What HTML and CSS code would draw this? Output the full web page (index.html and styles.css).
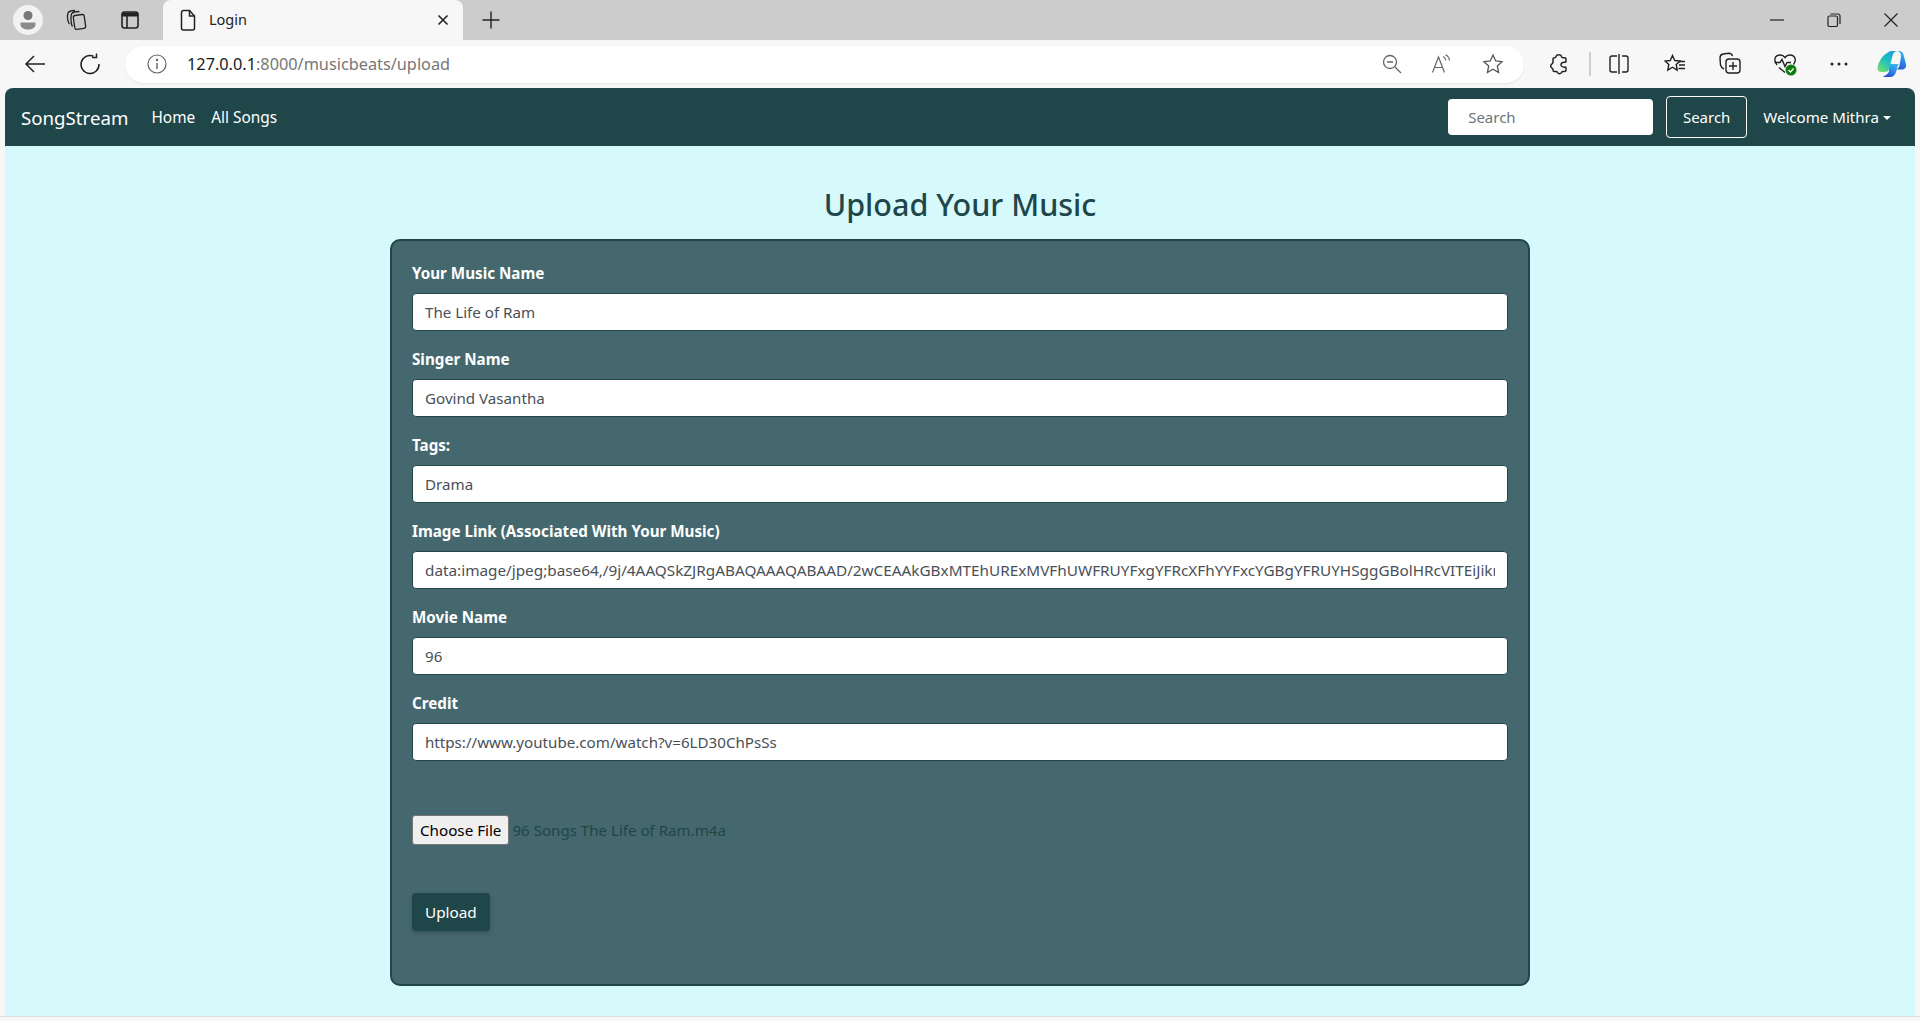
FILE: index.html
```html
<!DOCTYPE html>
<html lang="en">

<head>
  <meta charset="UTF-8">
  <title>Login</title>
  <link rel="stylesheet" href="styles.css">
</head>

<body>

  <div class="tabstrip">
    <span class="avatar">
      <svg width="28" height="28" viewBox="0 0 28 28"><circle cx="14" cy="9.5" r="4.5" fill="#777"/><path d="M6.500 16.500h15v2c0 3.500-3.500 5-7.500 5s-7.500-1.500-7.500-5z" fill="#8a8a8a"/></svg>
    </span>
    <span class="strip-icon icon-workspaces">
      <svg width="24" height="24" viewBox="0 0 24 24" fill="none" stroke="#222" stroke-width="1.300"><rect x="10" y="7" width="11" height="14" rx="2" transform="rotate(-8 15 14)"/><path d="M8.500 18.500C7 17 6.500 9 7.500 6c1-2 4-2.500 8-2.500M5.500 16C3.500 14 3 8 4 5c1-2 4-2.500 7-2.500"/></svg>
    </span>
    <span class="strip-icon icon-vtabs">
      <svg width="22" height="22" viewBox="0 0 22 22" fill="none" stroke="#222" stroke-width="1.600"><rect x="3" y="3" width="16" height="16" rx="2.500"/><path d="M3 5.500h16" stroke-width="4"/><path d="M8 6v13"/></svg>
    </span>
    <div class="tab">
      <svg width="20" height="24" viewBox="0 0 20 24" fill="none" stroke="#222" stroke-width="1.500"><path d="M3.500 4.500a2 2 0 0 1 2-2h6l5 5.500v12a2 2 0 0 1-2 2h-9a2 2 0 0 1-2-2z"/><path d="M11.500 2.500v5.500h5"/></svg>
      <span class="tab-title">Login</span>
      <svg class="tab-close" width="12" height="12" viewBox="0 0 12 12" stroke="#222" stroke-width="1.600"><path d="M1.500 1.500l9 9M10.500 1.500l-9 9"/></svg>
    </div>
    <svg class="new-tab" width="20" height="20" viewBox="0 0 20 20" stroke="#222" stroke-width="1.400"><path d="M10 1.500v17M1.500 10h17"/></svg>
    <div class="window-btns">
      <svg width="14" height="14" viewBox="0 0 14 14" stroke="#222" stroke-width="1.200"><path d="M0 7h14"/></svg>
      <svg width="14" height="14" viewBox="0 0 14 14" fill="none" stroke="#222" stroke-width="1.200"><rect x="1" y="3" width="9.500" height="10.500" rx="1.500"/><path d="M3.500 1h7.500a2 2 0 0 1 2 2v8"/></svg>
      <svg width="14" height="14" viewBox="0 0 14 14" stroke="#222" stroke-width="1.200"><path d="M0.500 0.500l13 13M13.500 0.500l-13 13"/></svg>
    </div>
  </div>

  <div class="toolbar">
    <svg class="back" width="22" height="20" viewBox="0 0 22 20" fill="none" stroke="#222" stroke-width="1.500"><path d="M21 10H2M10 2l-8 8 8 8"/></svg>
    <svg class="reload" width="22" height="22" viewBox="0 0 22 22" fill="none" stroke="#222" stroke-width="1.500"><path d="M14.500 3.200A9 9 0 1 0 20 11"/><path d="M15.500 0.500v4h-4.500" transform="translate(2 0)"/></svg>
    <div class="addressbar">
      <svg class="info" width="20" height="20" viewBox="0 0 20 20" fill="none" stroke="#666" stroke-width="1.200"><circle cx="10" cy="10" r="9"/><path d="M10 9v6" stroke-width="1.400"/><circle cx="10" cy="6" r="0.600"/></svg>
      <span class="url"><span class="url-host">127.0.0.1</span>:8000/musicbeats/upload</span>
      <span class="address-icons">
        <svg width="20" height="20" viewBox="0 0 20 20" fill="none" stroke="#666" stroke-width="1.300"><circle cx="8" cy="8" r="6.500"/><path d="M5 8h6M13 13l6 6"/></svg>
        <svg width="22" height="20" viewBox="0 0 22 20" fill="none" stroke="#666" stroke-width="1.200"><path d="M1.500 18.500L7.500 3l6 15.500M3.500 13.500h8"/><path d="M12 2.500c1.800.8 2.500 2 2.800 4M14.500.8c2.500 1.200 3.700 3 4 5.700"/></svg>
        <svg width="22" height="22" viewBox="0 0 22 22" fill="none" stroke="#555" stroke-width="1.300"><path d="M11 2l2.700 6 6.300.7-4.700 4.300 1.300 6.500-5.600-3.300-5.600 3.300 1.300-6.500L2 8.700 8.300 8z"/></svg>
      </span>
    </div>
    <div class="toolbar-icons">
      <svg class="tool-puzzle" width="20" height="22" viewBox="0 0 20 22" fill="none" stroke="#222" stroke-width="1.500" stroke-linejoin="round"><path d="M7 3.500C7.500 1 12 1 12.500 3.500c.2.800.8 1.200 1.500 1.200h1.500c1 0 1.500.6 1.500 1.500v2.300c0 .5-.4.800-1 .8-3-.3-4 1.200-4 2.400 0 1.300 1.200 2.700 4 2.400.6 0 1 .3 1 .8v2c0 1-.5 1.600-1.500 1.600H14c-.8 0-1.200.3-1.500 1-.8 1.500-3.300 1.500-4 0-.3-.7-.8-1-1.500-1H5.500c-1 0-1.500-.6-1.500-1.500 0-.8-.3-1.400-1-1.800-1.700-1-1.700-3.200 0-4.300.7-.4 1-1 1-1.800V6.200c0-1 .5-1.500 1.500-1.500C6.200 4.700 6.800 4.300 7 3.500z"/></svg>
      <span class="tool-divider"></span>
      <svg class="tool-split" width="20" height="20" viewBox="0 0 20 20" fill="none" stroke="#222" stroke-width="1.400"><path d="M8 2H3a2 2 0 0 0-2 2v12a2 2 0 0 0 2 2h5M13 2h4a2 2 0 0 1 2 2v12a2 2 0 0 1-2 2h-4M10 0v20"/></svg>
      <svg class="tool-favs" width="22" height="20" viewBox="0 0 22 20" fill="none" stroke="#222" stroke-width="1.400"><path d="M8.500 1.500l2.300 5 5.200.5-3.800 3.500 1 5.500-4.700-2.800-4.700 2.800 1-5.500L1 7l5.200-.5z"/><path d="M15 11h6M14.500 14.500h6.500M15 7.500h6"/></svg>
      <svg class="tool-collections" width="22" height="24" viewBox="0 0 22 24" fill="none" stroke="#222" stroke-width="1.400"><path d="M5 17c-2.500-1-3-2-3.500-4L1 6c0-2.500 1-3.500 3-4l6-.8c2 0 3 1 3.500 3"/><rect x="7" y="7" width="14" height="14" rx="3"/><path d="M14 10v8M10 14h8"/></svg>
      <svg class="tool-health" width="24" height="24" viewBox="0 0 24 24" fill="none"><path d="M4 13C0 8 2 3 7 3c2 0 4 1 5 2.500C13 4 15 3 17 3c5 0 7 5 3.500 9.500" stroke="#222" stroke-width="1.400"/><path d="M1.500 10.500H7l2-3 3 7 2-4h4M6 15.500l6 5" stroke="#222" stroke-width="1.400"/><circle cx="18" cy="18" r="5.500" fill="#107c10"/><path d="M15.500 18l2 2 3-3.500" stroke="#fff" stroke-width="1.300"/></svg>
      <svg class="tool-more" width="18" height="4" viewBox="0 0 18 4" fill="#222"><circle cx="2" cy="2" r="1.500"/><circle cx="9" cy="2" r="1.500"/><circle cx="16" cy="2" r="1.500"/></svg>
      <svg class="tool-copilot" width="30" height="28" viewBox="0 0 30 28"><defs><linearGradient id="cpA" x1="0.800" y1="0" x2="0.100" y2="1"><stop offset="0" stop-color="#1a9fe0"/><stop offset="0.500" stop-color="#20c4b8"/><stop offset="1" stop-color="#7fe06a"/></linearGradient><linearGradient id="cpB" x1="0.700" y1="0" x2="0.300" y2="1"><stop offset="0" stop-color="#35b6f2"/><stop offset="0.600" stop-color="#2a7fe6"/><stop offset="1" stop-color="#2b4fd0"/></linearGradient></defs><path d="M20 1h2c2.500 0 3.800 1.500 4.400 3.500l2.600 9.500c.8 3-1 5.500-4 5.500h-5.500c1.500-.5 2.500-2 3-4l1.500-8.500c.5-3-1-5.500-4-6z" fill="url(#cpB)"/><path d="M12 14h9.500L19 22c-1 3.500-3 5-6 5H8c-2 0-2-1-.5-1.300C10 25 11.500 23 12 21z" fill="url(#cpB)"/><path d="M11 2.500C12 1.500 13 1 15 1h5c-2.500.5-3.800 2-4.400 4.500L12.500 18c-.8 3-2.700 4-5 4H4c-2.500 0-4-2-3.500-4.500C1.500 12 5 5.500 11 2.500z" fill="url(#cpA)"/></svg>
    </div>
  </div>

  <nav class="navbar">
    <a class="brand" href="#">SongStream</a>
    <a class="nav-link" href="#">Home</a>
    <a class="nav-link" href="#">All Songs</a>
    <form class="search">
      <input class="search-input" type="text" placeholder="Search">
      <button class="search-btn" type="button">Search</button>
    </form>
    <a class="nav-link welcome" href="#">Welcome Mithra<span class="caret"></span></a>
  </nav>

  <main class="page">
    <h1 class="title">Upload Your Music</h1>
    <form class="upload-card">
      <label class="field-label" for="musicName">Your Music Name</label>
      <input class="field" type="text" id="musicName" value="The Life of Ram">

      <label class="field-label" for="singer">Singer Name</label>
      <input class="field" type="text" id="singer" value="Govind Vasantha">

      <label class="field-label" for="tags">Tags:</label>
      <input class="field" type="text" id="tags" value="Drama">

      <label class="field-label" for="imageLink">Image Link (Associated With Your Music)</label>
      <input class="field field-long" type="text" id="imageLink" value="data:image/jpeg;base64,/9j/4AAQSkZJRgABAQAAAQABAAD/2wCEAAkGBxMTEhURExMVFhUWFRUYFxgYFRcXFhYYFxcYGBgYFRUYHSggGBolHRcVITEiJikrLi4uFx8zODMsNygtLisBCgoKDg0OGhAQGy0lICUtLS0tLS0t">

      <label class="field-label" for="movie">Movie Name</label>
      <input class="field" type="text" id="movie" value="96">

      <label class="field-label" for="credit">Credit</label>
      <input class="field" type="text" id="credit" value="https://www.youtube.com/watch?v=6LD30ChPsSs">

      <div class="file-row">
        <button class="file-btn" type="button">Choose File</button>
        <span class="file-name">96 Songs The Life of Ram.m4a</span>
      </div>

      <button class="upload-btn" type="button">Upload</button>
    </form>
  </main>

  <div class="bottom-edge"></div>

</body>

</html>
```

FILE: styles.css
```css
* {
  box-sizing: border-box;
}

html,
body {
  height: 100%;
}

body {
  margin: 0;
  overflow: hidden;
  background-color: #f7f7f7;
  font-family: "Noto Sans", "Open Sans", sans-serif;
  font-size: 15px;
  color: #222;
}

/* browser chrome */
.tabstrip {
  display: flex;
  align-items: center;
  height: 40px;
  background-color: #cccccc;
}

.avatar {
  display: flex;
  align-items: center;
  justify-content: center;
  width: 30px;
  height: 30px;
  margin-left: 13px;
  border-radius: 50%;
  background-color: #f2f2f2;
}

.strip-icon {
  display: flex;
}

.icon-workspaces {
  margin-left: 21px;
}

.icon-vtabs {
  margin-left: 31px;
}

.tab {
  display: flex;
  align-items: center;
  width: 300px;
  height: 40px;
  margin-left: 22px;
  padding-left: 15px;
  border-radius: 8px 8px 0 0;
  background-color: #f7f7f7;
}

.tab-title {
  margin-left: 11px;
  padding-bottom: 2px;
  font-size: 14.500px;
}

.tab-close {
  margin-left: auto;
  margin-right: 14px;
}

.new-tab {
  margin-left: 18px;
}

.window-btns {
  display: flex;
  align-items: center;
  gap: 43px;
  margin-left: auto;
  margin-right: 22px;
}

.toolbar {
  display: flex;
  align-items: center;
  height: 48px;
  background-color: #f7f7f7;
}

.back {
  margin-left: 24px;
}

.reload {
  margin-left: 33px;
}

.addressbar {
  display: flex;
  align-items: center;
  width: 1399px;
  height: 37px;
  margin-left: 24px;
  padding-left: 22px;
  border-radius: 19px;
  background-color: #fff;
  box-shadow: 0 1px 2px rgba(0, 0, 0, 0.08);
}

.url {
  margin-left: 20px;
  font-size: 16.300px;
  color: #767676;
}

.url-host {
  color: #1a1a1a;
}

.address-icons {
  display: flex;
  align-items: center;
  gap: 29px;
  margin-left: auto;
  margin-right: 20px;
}

.toolbar-icons {
  display: flex;
  align-items: center;
  margin-left: 25px;
}

.tool-divider {
  width: 2px;
  height: 24px;
  margin-left: 20px;
  background-color: #cfcfcf;
}

.tool-split {
  margin-left: 18px;
}

.tool-favs {
  margin-left: 35px;
}

.tool-collections {
  margin-left: 33px;
}

.tool-health {
  margin-left: 32px;
}

.tool-more {
  margin-left: 33px;
}

.tool-copilot {
  margin-left: 29px;
}

/* navbar */
.navbar {
  display: flex;
  align-items: center;
  height: 58px;
  margin: 0 5px;
  padding: 0 24px 0 16px;
  border-radius: 8px 8px 0 0;
  background-color: #1f4649;
}

.brand {
  margin-right: 23px;
  font-size: 18.700px;
  color: #fff;
  text-decoration: none;
}

.nav-link {
  margin-right: 16px;
  font-size: 15.400px;
  color: #fff;
  text-decoration: none;
}

.search {
  display: flex;
  align-items: center;
  margin-left: auto;
}

.search-input {
  width: 205px;
  height: 36px;
  padding: 0 20px;
  border: 0;
  border-radius: 4px;
  background-color: #fff;
  font: inherit;
  font-size: 15px;
}

.search-input::placeholder {
  color: #6c757d;
}

.search-btn {
  width: 81px;
  height: 42px;
  margin-left: 13px;
  border: 1px solid #fff;
  border-radius: 4px;
  background-color: transparent;
  font: inherit;
  font-size: 15px;
  color: #fff;
}

.welcome {
  margin: 0 0 0 16px;
  font-size: 15.100px;
}

.caret {
  display: inline-block;
  margin-left: 4px;
  vertical-align: 3px;
  border-top: 4px solid #fff;
  border-right: 4px solid transparent;
  border-left: 4px solid transparent;
}

/* page */
.page {
  display: flex;
  flex-direction: column;
  align-items: center;
  height: 870px;
  margin: 0 5px;
  padding-top: 35px;
  background-color: #d6f9fc;
}

.title {
  margin: 0 0 11px;
  font-size: 30.500px;
  font-weight: 500;
  line-height: 47px;
  color: #1f4649;
}

.upload-card {
  display: flex;
  flex-direction: column;
  align-items: flex-start;
  width: 1140px;
  height: 747px;
  padding: 20px 20px 0;
  border: 2px solid #1f4649;
  border-radius: 10px;
  background-color: #45686e;
}

.field-label {
  margin-bottom: 8px;
  font-size: 15.200px;
  font-weight: 700;
  line-height: 24px;
  color: #fff;
}

.field {
  width: 100%;
  height: 38px;
  margin-bottom: 16px;
  padding: 6px 12px;
  border: 1px solid #1f4649;
  border-radius: 4px;
  background-color: #fff;
  font: inherit;
  font-size: 15.150px;
  color: #495057;
}

.field-long {
  font-size: 15.300px;
}

.file-row {
  display: flex;
  align-items: center;
  margin-top: 38px;
}

.file-btn {
  height: 30px;
  padding: 0 7px;
  border: 1px solid #767676;
  border-radius: 3px;
  background-color: #efefef;
  font: inherit;
  font-size: 15.200px;
  color: #000;
}

.file-name {
  margin-left: 3px;
  font-size: 15.100px;
  color: #1f4649;
}

.upload-btn {
  height: 38px;
  margin-top: 48px;
  padding: 0 13px;
  border: 0;
  border-radius: 4px;
  background-color: #1f4649;
  box-shadow: 0 2px 5px rgba(0, 0, 0, 0.2);
  font: inherit;
  font-size: 15.300px;
  color: #fff;
}

.bottom-edge {
  height: 5px;
  border-top: 1px solid #dcdcdc;
  background-color: #f7f7f7;
}
```
